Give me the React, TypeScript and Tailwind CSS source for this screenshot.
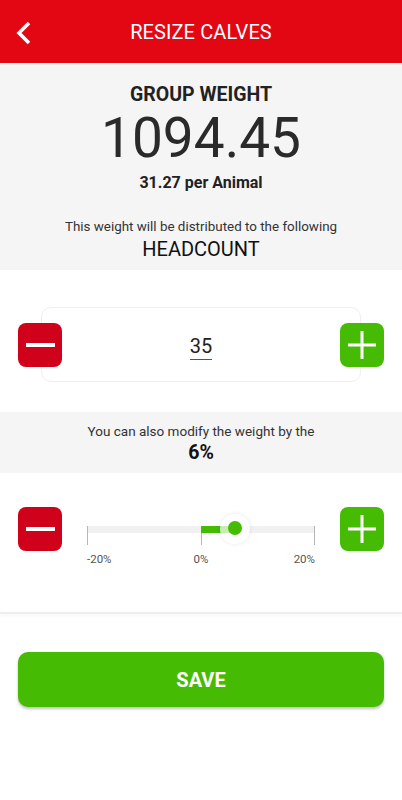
import { useState } from 'react';

const font = { fontFamily: 'Roboto, "Liberation Sans", sans-serif' };

function MinusButton() {
    return (
        <button
            type="button"
            className="relative z-10 w-[44px] h-[44px] shrink-0 rounded-[8px] bg-[#d0021b] flex items-center justify-center"
            aria-label="Decrease"
        >
            <span className="block w-[29px] h-[4px] bg-white" />
        </button>
    );
}

function PlusButton() {
    return (
        <button
            type="button"
            className="relative z-10 w-[44px] h-[44px] shrink-0 rounded-[8px] bg-[#46bb04] flex items-center justify-center"
            aria-label="Increase"
        >
            <svg width="30" height="30" viewBox="0 0 30 30">
                <path d="M15 1v28M1 15h28" stroke="white" strokeWidth="3" />
            </svg>
        </button>
    );
}

export default function App() {
    const [headcount] = useState(35);
    const [percent] = useState(6);
    const pos = 50 + (percent / 40) * 100;

    return (
        <div className="w-[402px] h-[800px] bg-white text-[#222]" style={font}>
            {/* header */}
            <div className="h-[63px] bg-[#e30613] flex items-center justify-center relative">
                <button type="button" className="absolute left-[13px] top-[19px]" aria-label="Back">
                    <svg width="22" height="28" viewBox="0 0 22 28">
                        <polyline points="16,4 6,14 16,24" fill="none" stroke="white" strokeWidth="3.6" />
                    </svg>
                </button>
                <div className="text-white text-[20px] tracking-[0.1px]">RESIZE CALVES</div>
            </div>

            {/* totals */}
            <div className="bg-[#f5f5f5] pt-[21px] pb-[10px] flex flex-col items-center">
                <div className="text-[19.5px] leading-[22px] font-bold text-[#222]">GROUP WEIGHT</div>
                <div className="mt-[2px] text-[55px] leading-[60px] text-[#2a2a2a]">1094.45</div>
                <div className="mt-[6px] text-[16px] leading-[18px] font-bold text-[#222]">31.27 per Animal</div>
                <div className="mt-[27px] text-[13.4px] leading-[16px] text-[#333]">
                    This weight will be distributed to the following
                </div>
                <div className="mt-[3px] text-[20px] leading-[22px] text-[#111]">HEADCOUNT</div>
            </div>

            {/* headcount stepper */}
            <div className="pt-[37px] pb-[30px] px-[18px] flex items-center">
                <MinusButton />
                <div className="flex-1 -mx-[21px] h-[75px] rounded-[10px] border border-[#efefef] bg-white flex items-center justify-center">
                    <div className="flex flex-col items-center pt-[6px]">
                        <span className="text-[20px] leading-[22px] text-[#222]">{headcount}</span>
                        <span className="mt-[2px] block w-[22px] h-[1px] bg-[#555]" />
                    </div>
                </div>
                <PlusButton />
            </div>

            {/* modifier */}
            <div className="bg-[#f5f5f5] h-[61px] flex flex-col items-center pt-[11px]">
                <div className="text-[13.5px] leading-[16px] text-[#333]">You can also modify the weight by the</div>
                <div className="mt-[3px] text-[19.5px] leading-[22px] font-bold text-[#111]">{percent}%</div>
            </div>

            <div className="pt-[34px] px-[18px] flex items-start h-[139px]">
                <MinusButton />
                <div className="flex-1 mx-[25px] mt-[19px]">
                    <div className="relative h-[7px] bg-[#f1f1f1]">
                        <span className="absolute left-0 top-0 w-[1px] h-[19px] bg-[#b5b5b5]" />
                        <span className="absolute left-1/2 top-0 w-[1px] h-[19px] bg-[#b5b5b5]" />
                        <span className="absolute right-0 top-0 w-[1px] h-[19px] bg-[#b5b5b5]" />
                        <span
                            className="absolute top-0 h-[7px] bg-[#46bb04]"
                            style={{ left: '50%', width: `${pos - 50}%` }}
                        />
                        <span
                            className="absolute top-[-12px] w-[30px] h-[30px] -ml-[15px] rounded-full bg-white/70 shadow-[0_0_4px_rgba(0,0,0,0.1)]"
                            style={{ left: `${pos}%` }}
                        />
                        <span
                            className="absolute top-[-5px] w-[14px] h-[14px] -ml-[7px] rounded-full bg-[#46bb04]"
                            style={{ left: `${pos}%` }}
                        />
                    </div>
                    <div className="grid grid-cols-3 mt-[19px] text-[11.5px] leading-[14px] text-[#555]">
                        <span className="text-left">-20%</span>
                        <span className="text-center">0%</span>
                        <span className="text-right">20%</span>
                    </div>
                </div>
                <PlusButton />
            </div>

            <div className="h-[2px] bg-[#eeeeee] shadow-[0_2px_3px_rgba(0,0,0,0.04)]" />

            <div className="px-[18px] pt-[38px]">
                <button
                    type="button"
                    className="w-full h-[55px] rounded-[10px] bg-[#46bb04] text-white text-[20px] font-bold shadow-[0_2px_3px_rgba(0,0,0,0.25)]"
                >
                    SAVE
                </button>
            </div>
        </div>
    );
}
